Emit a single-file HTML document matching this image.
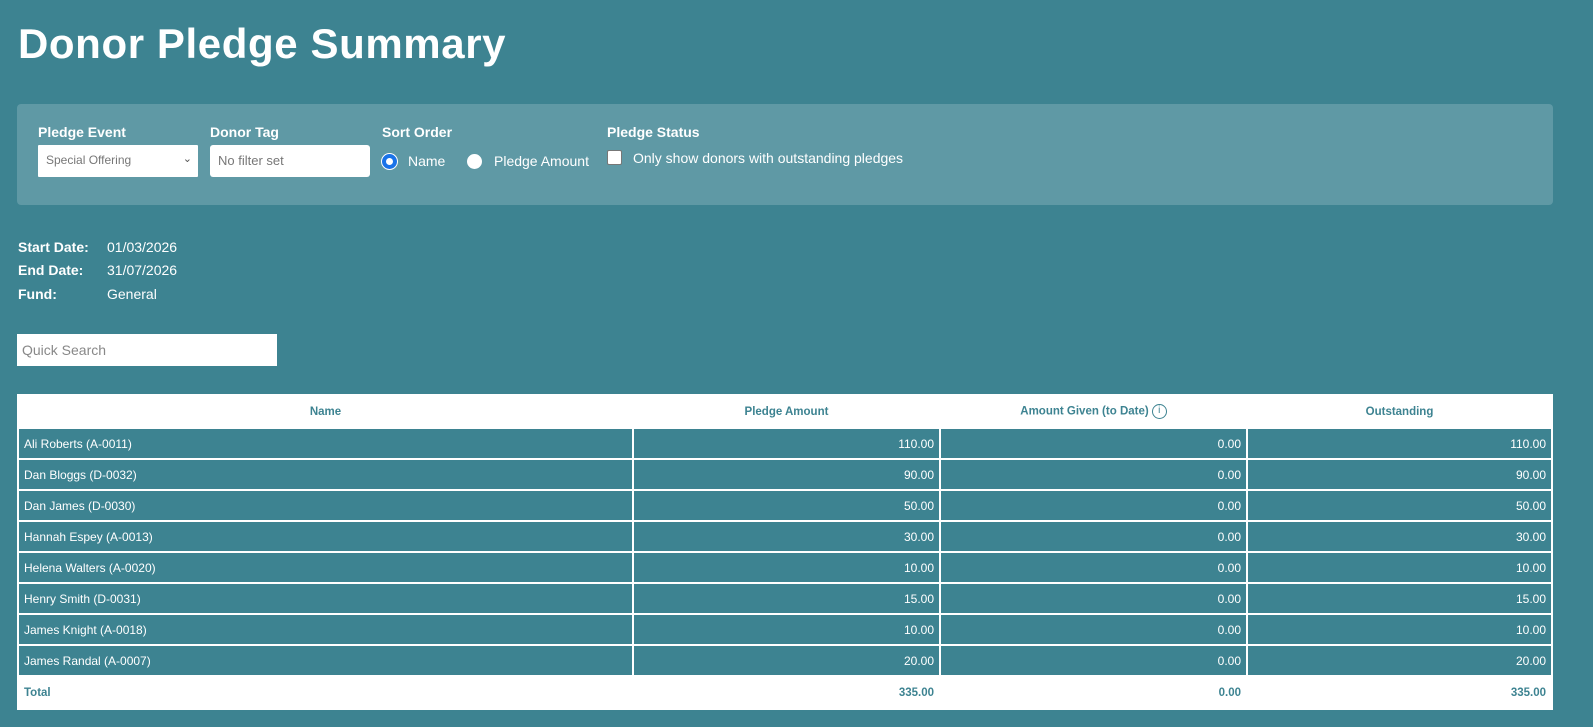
<!DOCTYPE html>
<html><head><meta charset="utf-8"><style>
*{box-sizing:border-box;margin:0;padding:0}
body{width:1593px;height:727px;background:#3d8391;font-family:"Liberation Sans",sans-serif;color:#fff;position:relative;overflow:hidden}
.a{position:absolute}
h1{position:absolute;left:18px;top:18px;font-size:42px;font-weight:bold;letter-spacing:0.6px;line-height:52px}
.panel{left:17px;top:104px;width:1536px;height:101px;background:#5f99a5;border-radius:4px}
.lbl{font-size:14px;font-weight:bold;top:124px}
.box{background:#fff;top:145px;height:32px;font-size:13px;color:#777;padding:8px 8px;line-height:15px}
.radio{width:15px;height:15px;border-radius:50%;background:#fff;top:154px}
.t{font-size:14px}
table{position:absolute;left:17px;top:394px;width:1536px;border-collapse:collapse;background:#fff;font-size:12px;table-layout:fixed}
td,th{border:2px solid #fff;height:31px;padding:0 5px;white-space:nowrap}
th{height:33px;color:#3d8391;font-weight:bold;font-size:11.5px;vertical-align:middle}
td{background:#3d8391;color:#fff}
td.r{text-align:right}
tr.tot td{background:#fff;color:#3d8391;font-weight:bold;font-size:11.5px;height:33px}
.ic{display:inline-block;width:15px;height:15px;border:1.3px solid #3d8391;border-radius:50%;font-size:10px;line-height:12px;text-align:center;vertical-align:middle;font-weight:normal;margin-left:3px}
</style></head><body>
<h1>Donor Pledge Summary</h1>
<div class="a panel"></div>
<div class="a lbl" style="left:38px">Pledge Event</div>
<div class="a lbl" style="left:210px">Donor Tag</div>
<div class="a lbl" style="left:382px">Sort Order</div>
<div class="a lbl" style="left:607px">Pledge Status</div>
<div class="a box" style="left:38px;width:160px;font-size:12px;border-radius:1px">Special Offering<span style="position:absolute;right:6px;top:7px;font-size:11px;color:#555">&#8964;</span></div>
<div class="a box" style="left:210px;width:160px;border-radius:3px">No filter set</div>
<div class="a radio" style="left:382px;border:4px solid #1a73e8;box-shadow:0 0 0 1px #fff"></div>
<div class="a t" style="left:408px;top:153px">Name</div>
<div class="a radio" style="left:467px"></div>
<div class="a t" style="left:494px;top:153px">Pledge Amount</div>
<div class="a" style="left:607px;top:150px;width:15px;height:15px;background:#fff;border-radius:2px;border:1px solid #777"></div>
<div class="a t" style="left:633px;top:150px">Only show donors with outstanding pledges</div>
<div class="a t" style="left:18px;top:236px;font-weight:bold;line-height:23.4px">Start Date:<br>End Date:<br>Fund:</div>
<div class="a t" style="left:107px;top:236px;line-height:23.4px">01/03/2026<br>31/07/2026<br>General</div>
<div class="a" style="left:17px;top:334px;width:260px;height:32px;background:#fff;color:#888;font-size:14px;padding:8px 5px">Quick Search</div>
<table>
<tr><th style="width:615px">Name</th><th style="width:307px">Pledge Amount</th><th style="width:307px"><span style="vertical-align:middle">Amount Given (to Date)</span><span class="ic">i</span></th><th>Outstanding</th></tr>
<tr><td>Ali Roberts (A-0011)</td><td class="r">110.00</td><td class="r">0.00</td><td class="r">110.00</td></tr>
<tr><td>Dan Bloggs (D-0032)</td><td class="r">90.00</td><td class="r">0.00</td><td class="r">90.00</td></tr>
<tr><td>Dan James (D-0030)</td><td class="r">50.00</td><td class="r">0.00</td><td class="r">50.00</td></tr>
<tr><td>Hannah Espey (A-0013)</td><td class="r">30.00</td><td class="r">0.00</td><td class="r">30.00</td></tr>
<tr><td>Helena Walters (A-0020)</td><td class="r">10.00</td><td class="r">0.00</td><td class="r">10.00</td></tr>
<tr><td>Henry Smith (D-0031)</td><td class="r">15.00</td><td class="r">0.00</td><td class="r">15.00</td></tr>
<tr><td>James Knight (A-0018)</td><td class="r">10.00</td><td class="r">0.00</td><td class="r">10.00</td></tr>
<tr><td>James Randal (A-0007)</td><td class="r">20.00</td><td class="r">0.00</td><td class="r">20.00</td></tr>
<tr class="tot"><td>Total</td><td class="r">335.00</td><td class="r">0.00</td><td class="r">335.00</td></tr>
</table>
</body></html>
